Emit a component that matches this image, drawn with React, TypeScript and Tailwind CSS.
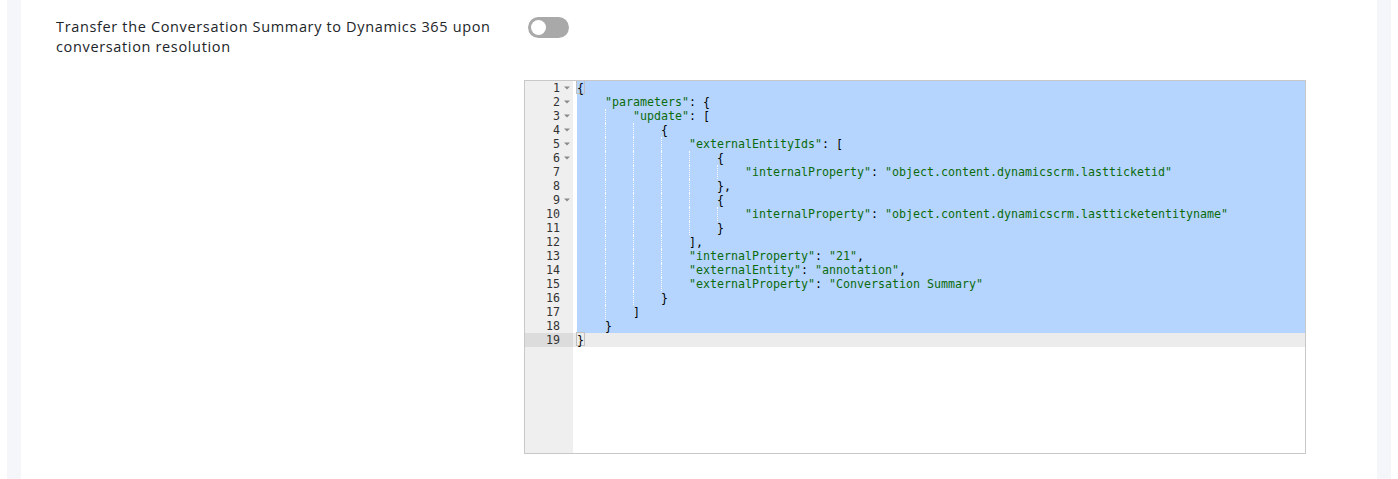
const jsonLines: { level: number; text: string; fold?: boolean }[] = [
  { level: 0, text: "{", fold: true },
  { level: 1, text: '"parameters": {', fold: true },
  { level: 2, text: '"update": [', fold: true },
  { level: 3, text: "{", fold: true },
  { level: 4, text: '"externalEntityIds": [', fold: true },
  { level: 5, text: "{", fold: true },
  { level: 6, text: '"internalProperty": "object.content.dynamicscrm.lastticketid"' },
  { level: 5, text: "}," },
  { level: 5, text: "{", fold: true },
  { level: 6, text: '"internalProperty": "object.content.dynamicscrm.lastticketentityname"' },
  { level: 5, text: "}" },
  { level: 4, text: "]," },
  { level: 4, text: '"internalProperty": "21",' },
  { level: 4, text: '"externalEntity": "annotation",' },
  { level: 4, text: '"externalProperty": "Conversation Summary"' },
  { level: 3, text: "}" },
  { level: 2, text: "]" },
  { level: 1, text: "}" },
  { level: 0, text: "}" },
];

function Tokens({ text }: { text: string }) {
  const parts = text.split(/("[^"]*")/);
  return (
    <>
      {parts.map((p, i) =>
        p.startsWith('"') ? (
          <span key={i} className="text-[#0b6b0b]">
            {p}
          </span>
        ) : (
          <span key={i} className="text-black">
            {p}
          </span>
        )
      )}
    </>
  );
}

function FoldArrow() {
  return (
    <svg width="6" height="4" viewBox="0 0 6 4" className="block">
      <path d="M0 0.5 L6 0.5 L3 3.5 Z" fill="#8a8a8a" />
    </svg>
  );
}

function Toggle() {
  return (
    <div className="flex h-[21px] w-[41px] items-center rounded-full bg-[#a9a9a9] pl-[3px]">
      <div className="h-[15px] w-[15px] rounded-full bg-white" />
    </div>
  );
}

function JsonEditor() {
  const last = jsonLines.length - 1;
  return (
    <div
      className="flex h-[374px] w-[782px] overflow-hidden border border-[#c8c8c8] bg-white text-[11.63px] leading-[14px]"
      style={{ fontFamily: '"DejaVu Sans Mono", "Liberation Mono", monospace' }}
    >
      <div className="w-[48px] shrink-0 bg-[#efefef] text-[#333]">
        {jsonLines.map((l, i) => (
          <div key={i} className={`flex h-[14px] items-center ${i === last ? "bg-[#dcdcdc]" : ""}`}>
            <span className="w-[35px] text-right">{i + 1}</span>
            <span className="flex w-[13px] justify-center">{l.fold && <FoldArrow />}</span>
          </div>
        ))}
      </div>
      <div className="flex-1">
        {jsonLines.map((l, i) => (
          <div key={i} className={`flex h-[14px] ${i === last ? "bg-[#ececec]" : ""}`}>
            <div className="w-[4px] shrink-0" />
            <div className={`flex flex-1 whitespace-pre ${i === last ? "" : "bg-[#b5d5ff]"}`}>
              {Array.from({ length: l.level }).map((_, j) => (
                <span
                  key={j}
                  className={`inline-block h-[14px] w-[28px] shrink-0 ${
                    j >= 1 ? "border-l border-dotted border-white" : ""
                  }`}
                />
              ))}
              {i === 0 || i === last ? (
                <span className="-ml-px -mt-px h-[14px] border border-[#c0c0c0] text-black">{l.text}</span>
              ) : (
                <Tokens text={l.text} />
              )}
            </div>
          </div>
        ))}
      </div>
    </div>
  );
}

export default function App() {
  return (
    <div className="h-[479px] w-full overflow-hidden bg-white px-[7px]">
      <div className="h-full bg-[#f5f6fa] px-[14px]">
        <div className="h-full bg-white pl-[35px] pt-[17px]">
          <div className="flex">
            <p
              className="w-[468px] pr-[20px] text-[14.5px] leading-[20px] tracking-[0.65px] text-[#212529]"
              style={{ fontFamily: '"Open Sans", "Noto Sans", sans-serif' }}
            >
              Transfer the Conversation Summary to Dynamics 365 upon conversation resolution
            </p>
            <div className="pl-[4px]">
              <Toggle />
            </div>
          </div>
          <div className="mt-[23px] pl-[468px]">
            <JsonEditor />
          </div>
        </div>
      </div>
    </div>
  );
}
